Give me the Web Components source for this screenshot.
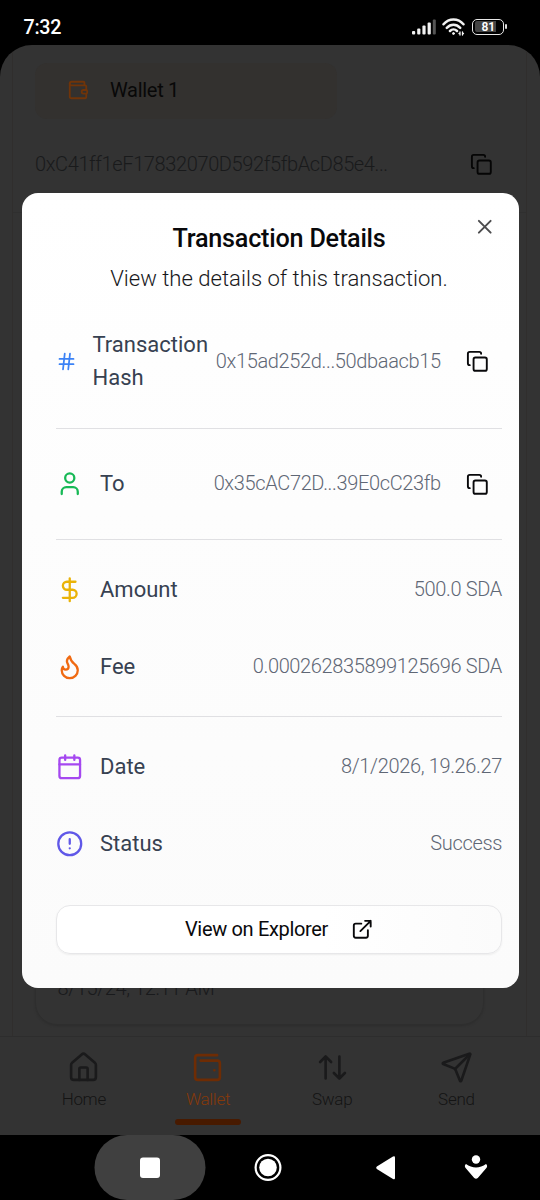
<!DOCTYPE html>
<html lang="en">
<head>
<meta charset="utf-8">
<title>Transaction Details</title>
<style>
html,body{margin:0;padding:0;background:#000;overflow:hidden}
body{font-family:Roboto,"Liberation Sans",sans-serif}
</style>
</head>
<body>
<phone-screen></phone-screen>
<script>
const ICONS = {
  copy:'<rect x="8" y="8" width="14" height="14" rx="2"/><path d="M4 16c-1.1 0-2-.9-2-2V4c0-1.1.9-2 2-2h10c1.1 0 2 .9 2 2"/>',
  close:'<path d="M18 6 6 18M6 6l12 12"/>',
  hash:'<path d="M4 9h16M4 15h16M10 3 8 21M16 3l-2 18"/>',
  user:'<path d="M19 21v-2a4 4 0 0 0-4-4H9a4 4 0 0 0-4 4v2"/><circle cx="12" cy="7" r="4"/>',
  dollar:'<path d="M12 2v20M17 5H9.5a3.5 3.5 0 0 0 0 7h5a3.5 3.5 0 0 1 0 7H6"/>',
  flame:'<path d="M8.5 14.5A2.5 2.5 0 0 0 11 12c0-1.38-.5-2-1-3-1.072-2.143-.224-4.054 2-6 .5 2.5 2 4.9 4 6.500 2 1.600 3 3.500 3 5.500a7 7 0 1 1-14 0c0-1.153.433-2.294 1-3a2.500 2.500 0 0 0 2.500 2.500z"/>',
  calendar:'<path d="M8 2v4M16 2v4M3 10h18"/><rect x="3" y="4" width="18" height="18" rx="2"/>',
  alert:'<circle cx="12" cy="12" r="10"/><path d="M12 8v4M12 16h.01"/>',
  external:'<path d="M15 3h6v6M10 14 21 3M18 13v6a2 2 0 0 1-2 2H5a2 2 0 0 1-2-2V8a2 2 0 0 1 2-2h6"/>',
  wallet:'<path d="M19 7V4a1 1 0 0 0-1-1H5a2 2 0 0 0 0 4h15a1 1 0 0 1 1 1v4h-3a2 2 0 0 0 0 4h3a1 1 0 0 0 1-1v-2a1 1 0 0 0-1-1"/><path d="M3 5v14a2 2 0 0 0 2 2h15a1 1 0 0 0 1-1v-4"/>',
  walletMinimal:'<path d="M17 14h.01M7 7h12a2 2 0 0 1 2 2v10a2 2 0 0 1-2 2H5a2 2 0 0 1-2-2V5a2 2 0 0 1 2-2h14"/>',
  house:'<path d="M15 21v-8a1 1 0 0 0-1-1h-4a1 1 0 0 0-1 1v8"/><path d="M3 10a2 2 0 0 1 .709-1.528l7-5.999a2 2 0 0 1 2.582 0l7 5.999A2 2 0 0 1 21 10v9a2 2 0 0 1-2 2H5a2 2 0 0 1-2-2z"/>',
  swap:'<path d="m21 16-4 4-4-4M17 20V4M3 8l4-4 4 4M7 4v16"/>',
  send:'<path d="M14.536 21.686a.5.5 0 0 0 .937-.024l6.5-19a.496.496 0 0 0-.635-.635l-19 6.5a.5.5 0 0 0-.024.937l7.93 3.18a2 2 0 0 1 1.112 1.11z"/><path d="m21.854 2.147-10.94 10.939"/>'
};
function define(name, render){
  customElements.define(name, class extends HTMLElement{
    constructor(){ super(); this.attachShadow({mode:'open'}); }
    connectedCallback(){ this.shadowRoot.innerHTML = render(this); }
  });
}

define('line-icon', el => `<style>
:host{display:block;flex:none;width:${el.getAttribute('size')}px;height:${el.getAttribute('size')}px}
svg{display:block;width:100%;height:100%;fill:none;stroke:currentColor;stroke-width:${el.getAttribute('weight')||2};stroke-linecap:round;stroke-linejoin:round}
</style><svg viewBox="0 0 24 24">${ICONS[el.getAttribute('name')]}</svg>`);

define('status-bar', () => `<style>
:host{display:flex;height:45px;box-sizing:border-box;padding:8px 33px 0 23.500px;align-items:center;color:#fff;font-size:19.700px;letter-spacing:-.3px;font-weight:500}
svg{display:block}
.time{flex:1;line-height:36px;padding-top:2px}
.sig{margin-right:6.500px}.wifi{margin-right:7px}
.bat{display:flex;align-items:center}
.cell{width:32px;height:16px;box-sizing:border-box;border:1.600px solid #e8e8e8;border-radius:5px;padding:1.500px 2px;}
.fill{background:linear-gradient(90deg,#444 81%,transparent 81%);border-radius:2px;height:100%;display:flex;align-items:center;justify-content:center;font-size:12px;letter-spacing:0;font-weight:600;line-height:10px}
.tip{width:1.700px;height:5px;margin-left:1px;background:#ddd;border-radius:1px}
</style>
<span class="time">7:32</span>
<svg class="sig" width="24" height="16" viewBox="0 0 24 16"><g fill="#f2f2f2"><rect y="12" width="3.200" height="3.500" rx="1"/><rect x="5.200" y="9.500" width="3.200" height="6" rx="1"/><rect x="10.400" y="6.500" width="3.200" height="9" rx="1"/><rect x="15.600" y="3.500" width="3.200" height="12" rx="1"/></g><rect x="20.800" y=".5" width="3" height="15" rx="1" fill="#555"/></svg>
<svg class="wifi" width="23" height="18" viewBox="0 0 23 18" fill="none" stroke="#f2f2f2" stroke-width="2.500" stroke-linecap="round"><path d="M1.500 6.300C7-.2 16-.2 21.500 6.300M4.800 9.800c3.900-4 9.500-4 13.400 0M8 13c2-2 5-2 7 0"/><circle cx="11.500" cy="15.500" r="1" fill="#f2f2f2" stroke-width="1"/><path d="M18 14v3M20.500 14v3M17 15.500h1M20.500 15.500h1" stroke-width="1.300"/></svg>
<div class="bat"><div class="cell"><div class="fill">81</div></div><div class="tip"></div></div>`);

define('wallet-page', () => `<style>
:host{display:flex;flex-direction:column;height:991px;box-sizing:border-box;margin:0 13px 0 12px;border:solid #302e2d;border-width:0 1px;padding:18px 0 0 22px}
.chip{width:302px;height:56px;border-radius:12px;background:#33312f;display:flex;align-items:center;box-sizing:border-box;padding:0 0 2px 31.500px;color:#080808;font-size:20px;letter-spacing:-.3px}
.chip line-icon{color:#703409;margin-right:21.500px}
.addr{display:flex;align-items:center;height:33px;margin-top:28px;font-size:20px;letter-spacing:-.38px;font-weight:300;color:#191a1b}
.addr span{width:435px}
.addr line-icon{color:#050505;position:relative;top:.5px}
.divider{height:1px;background:#2f2f2f;margin:32px 0 0 -22px}
.item{margin-top:690px;width:449px;height:122px;box-sizing:border-box;border:1px solid #2e2e2e;border-radius:22px;box-shadow:0 1px 2px #2d2d2d;padding:71px 22px 0 21.500px;font-size:20px;letter-spacing:-.38px;line-height:26px;color:#191a1c;font-weight:300}
</style>
<div class="chip"><line-icon name="wallet" size="22"></line-icon>Wallet 1</div>
<div class="addr"><span>0xC41ff1eF17832070D592f5fbAcD85e4...</span><line-icon name="copy" size="22.700"></line-icon></div>
<div class="divider"></div>
<div class="item">8/15/24, 12:11 AM</div>`);

define('nav-tab', el => `<style>
:host{display:flex;flex-direction:column;align-items:center;width:124.200px;box-sizing:border-box;padding-top:13.500px;font-size:17px;letter-spacing:-.3px;font-weight:300;color:${el.hasAttribute('active')?'#86390a':'#141414'}}
line-icon{color:${el.hasAttribute('active')?'#6e2c04':'#1a1a1b'}}
span{line-height:22px;margin-top:4px}
i{display:${el.hasAttribute('active')?'block':'none'};width:66px;height:5.500px;border-radius:3px;background:#481a00;margin-top:9.500px}
</style><line-icon name="${el.getAttribute('icon')}" size="33" weight="1.900"></line-icon><span><slot></slot></span><i></i>`);

define('tab-bar', () => `<style>
:host{display:flex;height:99px;box-sizing:border-box;border-top:1px solid #2d2d2d;padding-left:21.700px;background:#333}
</style><nav-tab icon="house">Home</nav-tab><nav-tab icon="walletMinimal" active>Wallet</nav-tab><nav-tab icon="swap">Swap</nav-tab><nav-tab icon="send">Send</nav-tab>`);

define('detail-row', el => `<style>
:host{display:flex;align-items:center;height:77px;box-sizing:border-box}
.ic{color:${el.getAttribute('tint')};width:${el.getAttribute('icon-box')||27.5}px;margin-right:16.500px;display:flex;justify-content:center}
.label{flex:1;font-size:22px;line-height:33px;color:#374151;font-weight:400;padding-bottom:${el.hasAttribute('copy')?2:0}px}
.value{font-size:20px;letter-spacing:-.35px;line-height:28px;padding-bottom:2px;color:#5f6775;font-weight:300;white-space:nowrap}
.copy{color:#09090b;margin:0 13.500px 0 25px}
</style>
<div class="ic"><line-icon name="${el.getAttribute('icon')}" size="${el.getAttribute('icon-size')||27.5}"></line-icon></div>
<div class="label">${el.getAttribute('label')}</div><div class="value"><slot></slot></div>
${el.hasAttribute('copy')?'<line-icon class="copy" name="copy" size="22.700"></line-icon>':''}`);

define('explorer-button', () => `<style>
:host{display:flex;height:49px;box-sizing:border-box;align-items:center;justify-content:center;border:1.400px solid #e7e7e9;border-radius:14px;background:linear-gradient(90deg,#fff 60%,#fbfbfb);box-shadow:0 1px 2px rgba(0,0,0,.06);font-size:20px;letter-spacing:-.33px;font-weight:400;color:#09090b}
span{padding-bottom:1px}
line-icon{margin-left:22.500px}
</style><span><slot></slot></span><line-icon name="external" size="22.500"></line-icon>`);

define('detail-dialog', () => `<style>
:host{display:block;width:496.500px;height:794.500px;box-sizing:border-box;background:linear-gradient(#fff,#fdfdfd 40%,#fbfbfb);border-radius:16px;padding:29px 16.500px 0 34px;position:relative}
h2{margin:0;font-size:25.200px;letter-spacing:-.22px;line-height:33px;font-weight:500;text-align:center;color:#09090b}
p{margin:7px 0 0;font-size:22.100px;line-height:33px;font-weight:300;text-align:center;color:#18181b}
.close{position:absolute;right:22.500px;top:22px;color:#4c4c4e}
.one{height:133px}.two{height:110px}
.group{padding:11px 0}
.line{height:1px;background:#e0e0e3}
explorer-button{margin-top:12px}
</style>
<line-icon class="close" name="close" size="23.500"></line-icon>
<h2>Transaction Details</h2><p>View the details of this transaction.</p>
<detail-row class="one" icon="hash" icon-box="20" icon-size="21" tint="#3b82f6" label="Transaction<br>Hash" copy>0x15ad252d...50dbaacb15</detail-row>
<div class="line"></div>
<detail-row class="two" icon="user" tint="#17b956" label="To" copy>0x35cAC72D...39E0cC23fb</detail-row>
<div class="line"></div>
<div class="group">
<detail-row icon="dollar" tint="#eab308" label="Amount">500.0 SDA</detail-row>
<detail-row icon="flame" tint="#f06a12" label="Fee">0.000262835899125696 SDA</detail-row>
</div>
<div class="line"></div>
<div class="group">
<detail-row icon="calendar" tint="#a548f0" label="Date">8/1/2026, 19.26.27</detail-row>
<detail-row icon="alert" tint="#6058e8" label="Status">Success</detail-row>
</div>
<explorer-button>View on Explorer</explorer-button>`);

define('system-nav', () => `<style>
:host{display:block;height:65px;background:#000}
svg{display:block}
</style><svg width="540" height="65" viewBox="0 0 540 65">
<rect x="94.500" y="0" width="111" height="65" rx="32.500" fill="#404040"/>
<g fill="#fff"><rect x="140" y="22.500" width="20" height="20.500" rx="3"/>
<circle cx="268" cy="32.500" r="8.800"/><circle cx="268" cy="32.500" r="12.400" fill="none" stroke="#fff" stroke-width="2.200"/>
<path d="M376.800 31.500 393 21.500q2-1 2 1v20.500q0 2-2 1L376.800 34q-1.300-1.200 0-2.500z"/>
<circle cx="476" cy="24.500" r="4.200"/><path d="M466 29c6 4.500 14 4.500 20 0 1.200 1 1.500 2.500.6 3.800l-8.800 10.200q-1.800 1.600-3.600 0L465.400 32.800c-.9-1.300-.6-2.800.6-3.800z"/></g></svg>`);

define('phone-screen', () => `<style>
:host{display:block;width:540px;height:1200px;background:#000;overflow:hidden;position:relative}
.app{height:1090px;background:#333;border-radius:32px 32px 0 0;overflow:hidden}
detail-dialog{position:absolute;left:22px;top:193px}
</style>
<status-bar></status-bar>
<div class="app"><wallet-page></wallet-page><tab-bar></tab-bar></div>
<system-nav></system-nav>
<detail-dialog></detail-dialog>`);
</script>
</body>
</html>
